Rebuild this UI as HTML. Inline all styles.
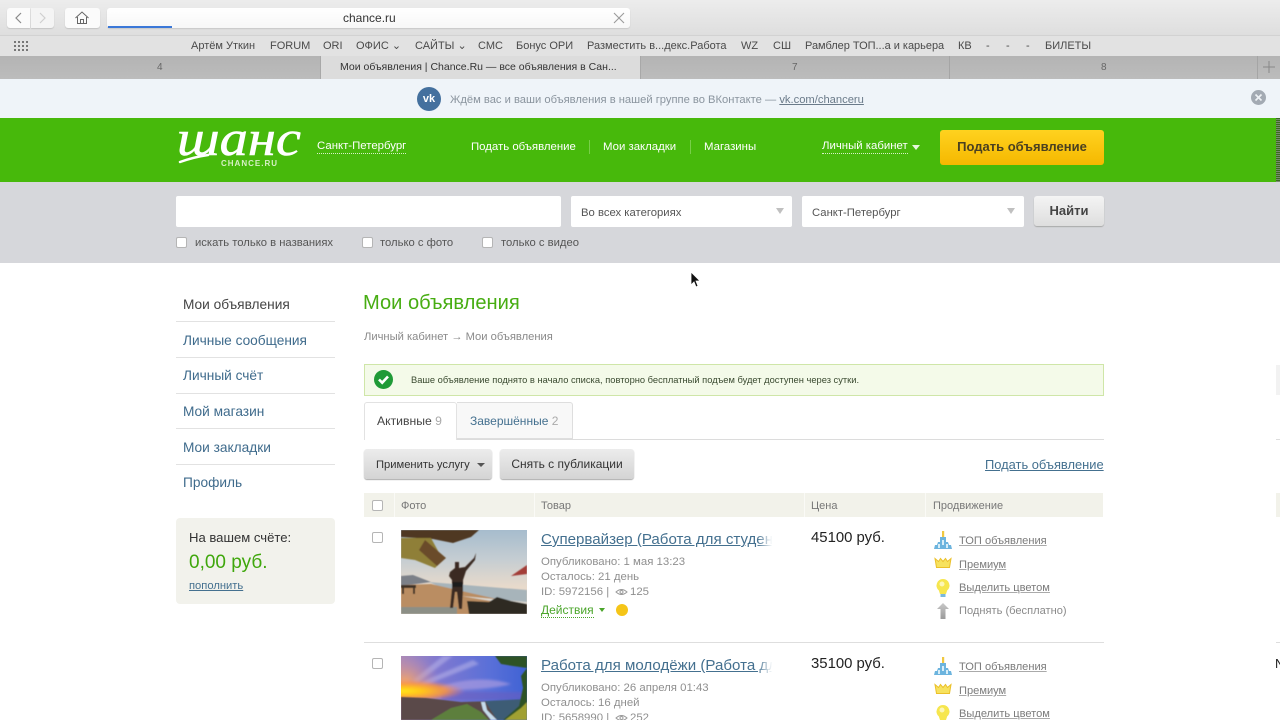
<!DOCTYPE html>
<html lang="ru"><head><meta charset="utf-8"><title>Мои объявления | Chance.Ru</title>
<style>
*{box-sizing:border-box}
html,body{margin:0;padding:0;width:1280px;height:720px;overflow:hidden;background:#fff}
body{position:relative;font-family:"Liberation Sans","Noto Sans CJK SC",sans-serif;color:#444}
#w{position:absolute;left:0;top:0;width:1280px;height:720px;overflow:hidden;filter:blur(.35px)}
.a{position:absolute;white-space:nowrap}
.b{position:absolute}
.bm{font-size:11px;color:#4a4a4a;top:40px;line-height:12px}
.tabn{position:absolute;top:62px;font-size:10px;color:#666;line-height:12px}
.nav{top:140px;font-size:11.4px;color:#fff;line-height:14px}
.side{left:183px;font-size:13.7px;color:#3f6b8c;line-height:16px}
.sl{position:absolute;left:176px;width:159px;height:1px;background:#e2e2e2}
.cb{position:absolute;width:11px;height:11px;background:#fff;border:1px solid #b5b5b5;border-radius:2px}
.meta{font-size:11.4px;color:#8f8f8f;line-height:14px;left:541px}
.title{left:541px;font-size:15.1px;color:#44708f;text-decoration:underline;line-height:18px;width:232px;overflow:hidden}
.fade{position:absolute;left:757px;width:18px;height:20px;background:linear-gradient(90deg,rgba(255,255,255,0),#fff 85%)}
.price{left:811px;font-size:14.9px;color:#222;line-height:17px}
.pr{font-size:11.1px;color:#7b7b7b;line-height:14px;text-decoration:underline;text-decoration-color:#aaa}
.th{top:500px;font-size:11px;color:#777;line-height:13px}
.btn{position:absolute;top:449px;height:30px;background:linear-gradient(#ececec,#d4d4d4);border-radius:3px;box-shadow:0 1px 1px #aaa;font-size:12px;color:#333;line-height:30px;text-align:center;white-space:nowrap}
.lb{top:236px;font-size:11.25px;line-height:14px;color:#555}
</style></head><body><div id="w">

<!-- browser chrome -->
<div class="b" style="left:0;top:0;width:1280px;height:35px;background:linear-gradient(#ececec,#dedede)"></div>
<div class="b" style="left:0;top:35px;width:1280px;height:21px;background:#e2e2e2;border-top:1px solid #d2d2d2"></div>
<div class="b" style="left:7px;top:8px;width:23px;height:20px;background:#fbfbfb;border-radius:3px 0 0 3px;box-shadow:0 1px 1px #c4c4c4"></div>
<div class="b" style="left:31px;top:8px;width:23px;height:20px;background:#f4f4f4;border-radius:0 3px 3px 0;box-shadow:0 1px 1px #c4c4c4"></div>
<svg class="b" style="left:7px;top:8px" width="47" height="20" fill="none"><path d="M14 5l-5 5 5 5" stroke="#8a8a8a" stroke-width="1.2"/><path d="M33 5l5 5-5 5" stroke="#cfcfcf" stroke-width="1.2"/></svg>
<div class="b" style="left:65px;top:8px;width:35px;height:20px;background:#fbfbfb;border-radius:3px;box-shadow:0 1px 1px #c4c4c4"></div>
<svg class="b" style="left:74px;top:10px" width="16" height="15" fill="none" stroke="#666" stroke-width="1"><path d="M1.5 8L8 2l6.5 6M3.5 7v6.5h9V7M6.5 13.5V9.5h3v4"/></svg>
<div class="b" style="left:107px;top:8px;width:523px;height:20px;background:linear-gradient(#fff,#f7f7f7);border-radius:3px;box-shadow:0 1px 1px #c8c8c8"></div>
<div class="b" style="left:108px;top:26px;width:64px;height:2px;background:#3b78d8"></div>
<div class="a" style="left:343px;top:11px;font-size:12px;line-height:14px;color:#333">chance.ru</div>
<svg class="b" style="left:613px;top:12px" width="12" height="12" fill="none" stroke="#9a9a9a" stroke-width="1.1"><path d="M1 1l10 10M11 1L1 11"/></svg>
<svg class="b" style="left:14px;top:41px" width="15" height="11" fill="#777"><rect x="0" y="0" width="2" height="2"/><rect x="4" y="0" width="2" height="2"/><rect x="8" y="0" width="2" height="2"/><rect x="12" y="0" width="2" height="2"/><rect x="0" y="4" width="2" height="2"/><rect x="4" y="4" width="2" height="2"/><rect x="8" y="4" width="2" height="2"/><rect x="12" y="4" width="2" height="2"/><rect x="0" y="8" width="2" height="2"/><rect x="4" y="8" width="2" height="2"/><rect x="8" y="8" width="2" height="2"/><rect x="12" y="8" width="2" height="2"/></svg>
<div class="a bm" style="left:191px">Артём Уткин</div>
<div class="a bm" style="left:270px">FORUM</div>
<div class="a bm" style="left:323px">ORI</div>
<div class="a bm" style="left:356px">ОФИС ⌄</div>
<div class="a bm" style="left:415px">САЙТЫ ⌄</div>
<div class="a bm" style="left:478px">СМС</div>
<div class="a bm" style="left:516px">Бонус ОРИ</div>
<div class="a bm" style="left:587px">Разместить в...декс.Работа</div>
<div class="a bm" style="left:741px">WZ</div>
<div class="a bm" style="left:773px">СШ</div>
<div class="a bm" style="left:805px;letter-spacing:-.02px">Рамблер ТОП...а и карьера</div>
<div class="a bm" style="left:958px">КВ</div>
<div class="a bm" style="left:986px">-</div>
<div class="a bm" style="left:1006px">-</div>
<div class="a bm" style="left:1026px">-</div>
<div class="a bm" style="left:1045px">БИЛЕТЫ</div>

<!-- tabs -->
<div class="b" style="left:0;top:56px;width:1280px;height:23px;background:linear-gradient(#b4b4b4,#bcbcbc)"></div>
<div class="b" style="left:320px;top:56px;width:321px;height:23px;background:#dcdcdc;border-left:1px solid #a8a8a8;border-right:1px solid #a8a8a8"></div>
<div class="b" style="left:949px;top:56px;width:1px;height:23px;background:#a5a5a5"></div>
<div class="b" style="left:1257px;top:56px;width:1px;height:23px;background:#a5a5a5"></div>
<div class="tabn" style="left:157px">4</div>
<div class="tabn" style="left:792px">7</div>
<div class="tabn" style="left:1101px">8</div>
<div class="a" style="left:340px;top:61px;font-size:10.5px;line-height:13px;color:#333">Мои объявления | Chance.Ru — все объявления в Сан...</div>
<svg class="b" style="left:1263px;top:61px" width="12" height="12" stroke="#888" stroke-width="1"><path d="M6 0v12M0 6h12"/></svg>

<!-- vk bar -->
<div class="b" style="left:0;top:79px;width:1280px;height:39px;background:#eff4f9"></div>
<div class="b" style="left:417px;top:87px;width:24px;height:24px;border-radius:50%;background:#44709e"></div>
<div class="a" style="left:422px;top:92px;width:14px;font-size:11px;line-height:14px;font-weight:bold;color:#fff;text-align:center">vk</div>
<div class="a" style="left:450px;top:92.5px;font-size:11.2px;line-height:14px;color:#8a949e">Ждём вас и ваши объявления в нашей группе во ВКонтакте — <span style="color:#6a7a89;text-decoration:underline">vk.com/chanceru</span></div>
<div class="b" style="left:1251px;top:90px;width:15px;height:15px;border-radius:50%;background:#a3aab3"></div>
<svg class="b" style="left:1251px;top:90px" width="15" height="15" stroke="#eef2f6" stroke-width="1.6"><path d="M4.5 4.5l6 6M10.5 4.5l-6 6"/></svg>

<!-- green header -->
<div class="b" style="left:0;top:118px;width:1280px;height:64px;background:#47b90b"></div>
<div class="b" style="left:1276px;top:118px;width:4px;height:64px;background:repeating-linear-gradient(#3a6a20 0 1px,#7a8a70 1px 2px)"></div>
<svg class="b" style="left:174px;top:120px" width="132" height="50">
<text x="3" y="35" font-family="Liberation Serif,serif" font-style="italic" font-size="50" fill="#fff" stroke="#fff" stroke-width=".6" textLength="124" lengthAdjust="spacingAndGlyphs">шанс</text>
<path d="M6 42Q20 37 34 35" stroke="#fff" stroke-width="2.5" fill="none" stroke-linecap="round"/>
</svg>
<div class="a" style="left:221px;top:159px;font-size:8px;font-weight:bold;line-height:10px;letter-spacing:1px;color:#d6f0c4">CHANCE.RU</div>
<div class="a nav" style="left:317px;border-bottom:1px dotted #d8f0c8;line-height:13px">Санкт-Петербург</div>
<div class="a nav" style="left:471px">Подать объявление</div>
<div class="b" style="left:589px;top:140px;width:1px;height:14px;background:#78cf48"></div>
<div class="a nav" style="left:603px">Мои закладки</div>
<div class="b" style="left:690px;top:140px;width:1px;height:14px;background:#78cf48"></div>
<div class="a nav" style="left:704px">Магазины</div>
<div class="a nav" style="left:822px;border-bottom:1px dotted #d8f0c8;line-height:13px">Личный кабинет</div>
<div class="b" style="left:912px;top:145px;border:4px solid transparent;border-top:5px solid #e8f6dc;border-bottom:0"></div>
<div class="b" style="left:940px;top:130px;width:164px;height:35px;border-radius:3px;background:linear-gradient(#ffd21f,#f5b800);color:#4a4020;font-size:13px;font-weight:bold;line-height:34px;text-align:center">Подать объявление</div>

<!-- search -->
<div class="b" style="left:0;top:182px;width:1280px;height:81px;background:#d6d7db"></div>
<div class="b" style="left:176px;top:196px;width:385px;height:31px;background:#fff;border-radius:2px"></div>
<div class="b" style="left:571px;top:196px;width:221px;height:31px;background:#fff;border-radius:2px"></div>
<div class="b" style="left:802px;top:196px;width:222px;height:31px;background:#fff;border-radius:2px"></div>
<div class="a" style="left:581px;top:206px;font-size:11.3px;line-height:14px;color:#555">Во всех категориях</div>
<div class="a" style="left:812px;top:206px;font-size:11.3px;line-height:14px;color:#555">Санкт-Петербург</div>
<div class="b" style="left:776px;top:208px;border:4.5px solid transparent;border-top:6px solid #c0c0c0;border-bottom:0"></div>
<div class="b" style="left:1007px;top:208px;border:4.5px solid transparent;border-top:6px solid #c0c0c0;border-bottom:0"></div>
<div class="b" style="left:1034px;top:196px;width:70px;height:30px;border-radius:3px;background:linear-gradient(#f4f4f4,#dedede);box-shadow:0 1px 1px #a8a8a8;font-size:13px;font-weight:bold;color:#444;line-height:29px;text-align:center">Найти</div>
<div class="cb" style="left:176px;top:237px"></div>
<div class="a lb" style="left:195px">искать только в названиях</div>
<div class="cb" style="left:362px;top:237px"></div>
<div class="a lb" style="left:380px">только с фото</div>
<div class="cb" style="left:482px;top:237px"></div>
<div class="a lb" style="left:501px">только с видео</div>

<!-- sidebar -->
<div class="a side" style="top:297px;color:#444">Мои объявления</div><div class="sl" style="top:321px"></div>
<div class="a side" style="top:333px">Личные сообщения</div><div class="sl" style="top:357px"></div>
<div class="a side" style="top:368px">Личный счёт</div><div class="sl" style="top:393px"></div>
<div class="a side" style="top:404px">Мой магазин</div><div class="sl" style="top:428px"></div>
<div class="a side" style="top:440px">Мои закладки</div><div class="sl" style="top:464px"></div>
<div class="a side" style="top:475px">Профиль</div>
<div class="b" style="left:176px;top:518px;width:159px;height:86px;background:#f2f2ec;border-radius:4px"></div>
<div class="a" style="left:189px;top:530px;font-size:13.1px;line-height:16px;color:#333">На вашем счёте:</div>
<div class="a" style="left:189px;top:552px;font-size:19px;line-height:22px;color:#3fa70c">0,00 руб.</div>
<div class="a" style="left:189px;top:580px;font-size:11.2px;line-height:13px;color:#44708f;text-decoration:underline">пополнить</div>

<!-- main -->
<div class="a" style="left:363px;top:291px;font-size:20.1px;line-height:24px;color:#47ad12">Мои объявления</div>
<div class="a" style="left:364px;top:330px;font-size:11.2px;line-height:14px;color:#8a8a8a">Личный кабинет → Мои объявления</div>
<div class="b" style="left:364px;top:364px;width:740px;height:32px;background:#f4fae9;border:1px solid #cfe6a8"></div>
<div class="b" style="left:374px;top:370px;width:19px;height:19px;border-radius:50%;background:#1f9a37"></div>
<svg class="b" style="left:374px;top:370px" width="19" height="19" fill="none" stroke="#fff" stroke-width="2.6"><path d="M5 9.5l3.2 3.2L14 6.5"/></svg>
<div class="a" style="left:411px;top:374px;font-size:9.33px;line-height:12px;color:#3a4a30">Ваше объявление поднято в начало списка, повторно бесплатный подъем будет доступен через сутки.</div>

<div class="b" style="left:364px;top:439px;width:740px;height:1px;background:#dcdcdc"></div>
<div class="b" style="left:364px;top:402px;width:93px;height:38px;background:#fff;border:1px solid #e2e2e2;border-bottom:0;border-radius:3px 3px 0 0"></div>
<div class="b" style="left:457px;top:402px;width:116px;height:37px;background:#f8f8f8;border:1px solid #dedede;border-left:0;border-radius:0 3px 0 0"></div>
<div class="a" style="left:377px;top:414px;font-size:12.2px;line-height:14px;color:#444">Активные <span style="color:#aaa">9</span></div>
<div class="a" style="left:470px;top:414px;font-size:12px;line-height:14px;color:#44708f">Завершённые <span style="color:#aaa">2</span></div>

<div class="btn" style="left:364px;width:128px"></div>
<div class="a" style="left:376px;top:458px;font-size:11.2px;line-height:14px;color:#333">Применить услугу</div>
<div class="b" style="left:477px;top:463px;border:4px solid transparent;border-top:4px solid #555;border-bottom:0"></div>
<div class="btn" style="left:500px;width:134px">Снять с публикации</div>
<div class="a" style="left:985px;top:456.500px;font-size:12.9px;line-height:16px;color:#44708f;text-decoration:underline">Подать объявление</div>

<!-- table head -->
<div class="b" style="left:364px;top:493px;width:739px;height:24px;background:#f2f2ea"></div>
<div class="b" style="left:394px;top:493px;width:1px;height:24px;background:#fafaf6"></div>
<div class="b" style="left:534px;top:493px;width:1px;height:24px;background:#fafaf6"></div>
<div class="b" style="left:804px;top:493px;width:1px;height:24px;background:#fafaf6"></div>
<div class="b" style="left:925px;top:493px;width:1px;height:24px;background:#fafaf6"></div>
<div class="cb" style="left:372px;top:500px"></div>
<div class="a th" style="left:401px">Фото</div>
<div class="a th" style="left:541px">Товар</div>
<div class="a th" style="left:811px">Цена</div>
<div class="a th" style="left:933px">Продвижение</div>

<!-- row 1 -->
<div class="cb" style="left:372px;top:532px"></div>
<svg class="b" style="left:401px;top:530px" width="126" height="84">
<defs>
<linearGradient id="s1" x1="0" y1="0" x2="0" y2="1"><stop offset="0" stop-color="#a6bccd"/><stop offset=".35" stop-color="#c5cdd2"/><stop offset=".68" stop-color="#e8dacb"/></linearGradient>
<filter id="bl" x="-5%" y="-5%" width="110%" height="110%"><feGaussianBlur stdDeviation=".6"/></filter>
<filter id="bl2" x="-5%" y="-5%" width="110%" height="110%"><feGaussianBlur stdDeviation="1.4"/></filter>
<radialGradient id="sun"><stop offset="0" stop-color="#ffe81c"/><stop offset=".35" stop-color="#ffc21e"/><stop offset=".7" stop-color="#fb9440" stop-opacity=".85"/><stop offset="1" stop-color="#ee7f70" stop-opacity="0"/></radialGradient>
<radialGradient id="glow"><stop offset="0" stop-color="#f8a860" stop-opacity=".95"/><stop offset="1" stop-color="#c88ab0" stop-opacity="0"/></radialGradient>
<clipPath id="c1"><rect width="126" height="84"/></clipPath>
<clipPath id="c2"><rect width="126" height="64"/></clipPath>
</defs>
<g clip-path="url(#c1)"><rect width="126" height="84" fill="url(#s1)"/>
<g filter="url(#bl)">
<path d="M0 46L12 45 30 52 0 56Z" fill="#7b8088"/>
<path d="M28 52L126 60V74L60 66Z" fill="#a7b4ba"/>
<path d="M0 55L30 54 126 76V84H0Z" fill="#ba8d62"/>
<path d="M60 66L126 72V77Z" fill="#dcd8d0"/>
<rect y="77" width="56" height="7" fill="#8c8f86"/>
<path d="M0 0H78L70 7 52 13 32 9 0 7Z" fill="#4f3820"/>
<path d="M0 8H30L42 30 34 38 14 30 0 28Z" fill="#8f7f38"/>
<path d="M24 10L45 28 36 36 18 20Z" fill="#6a4c2a"/>
<path d="M49 42L54 38V32H58V38L64 37 73 28 75 23 74 30 65 41 62 50 62 60 61 79H58L56 62 54 62 52 78H49L51 58 51 50 48 46Z" fill="#3a2a20"/>
<rect x="51.500" y="52" width="10" height="5" fill="#1e1a1c"/>
<path d="M110 46L126 35V44Z" fill="#a33e38"/>
<path d="M66 71L88 72 96 67 110 71 126 74V84H68Z" fill="#2f2b24"/>
<rect y="55" width="15" height="3" fill="#3f3226"/><rect x="1" y="58" width="2" height="6" fill="#3f3226"/><rect x="12" y="58" width="2" height="6" fill="#3f3226"/>
</g></g>
</svg>
<div class="a title" style="top:531px">Супервайзер (Работа для студентов)</div><div class="fade" style="top:531px"></div>
<div class="a meta" style="top:555px">Опубликовано: 1 мая 13:23</div>
<div class="a meta" style="top:570px">Осталось: 21 день</div>
<div class="a meta" style="top:585px">ID: 5972156 |</div>
<svg class="b" style="left:615px;top:587px" width="13" height="10" fill="none" stroke="#9a9a9a"><path d="M1 5Q6.500 0 12 5 6.500 10 1 5Z"/><circle cx="6.500" cy="5" r="1.500"/></svg>
<div class="a meta" style="left:630px;top:585px">125</div>
<div class="a" style="left:541px;top:603px;font-size:12px;line-height:14px;color:#4aa52a;border-bottom:1px dotted #4aa52a">Действия</div>
<div class="b" style="left:599px;top:608px;border:3px solid transparent;border-top:4px solid #4aa52a;border-bottom:0"></div>
<div class="b" style="left:616px;top:604px;width:12px;height:12px;border-radius:50%;background:#f5c518"></div>
<div class="a price" style="top:530px">45100 руб.</div>

<svg class="b" style="left:933px;top:531px" width="20" height="90">
<defs><linearGradient id="ar" x1="0" y1="0" x2="0" y2="1"><stop offset="0" stop-color="#c8c8c8"/><stop offset="1" stop-color="#9a9a9a"/></linearGradient></defs>
<path d="M9 0h2.200v6H9z" fill="#f0c840"/>
<path d="M7 6h6v5h2l1 3h2l1 4H1l1-4h2l1-3h2z" fill="#6cb4de"/><rect x="9" y="9" width="2" height="5" fill="#d8eef8"/><rect x="5" y="13" width="2" height="4" fill="#d8eef8"/><rect x="13" y="13" width="2" height="4" fill="#d8eef8"/>
<path d="M2 27.500l3.500 3 2-3 2.500 3 2.500-3 2 3 3.500-3-1.500 9H3.500z" fill="#f7e25e" stroke="#ebc02a"/>
<path d="M10 48a6.500 6.500 0 0 1 4.200 11.400L13 63H7l-1.200-3.600A6.500 6.500 0 0 1 10 48z" fill="#f6e64e"/><circle cx="9" cy="53" r="2.500" fill="#fcf6b8"/><rect x="7.500" y="63" width="5" height="3" fill="#7ab8dc"/>
<path d="M10 72l6 6h-3.500v10h-5V78H4z" fill="url(#ar)"/>
</svg>
<div class="a pr" style="left:959px;top:534px">ТОП объявления</div>
<div class="a pr" style="left:959px;top:558px">Премиум</div>
<div class="a pr" style="left:959px;top:581px">Выделить цветом</div>
<div class="a pr" style="left:959px;top:604px;text-decoration:none;color:#8a8a8a">Поднять (бесплатно)</div>

<div class="b" style="left:364px;top:642px;width:740px;height:1px;background:#dedede"></div>

<!-- row 2 -->
<div class="cb" style="left:372px;top:658px"></div>
<svg class="b" style="left:401px;top:656px" width="126" height="64">
<defs>
<linearGradient id="s2" x1="0" y1="0" x2="1" y2="0"><stop offset="0" stop-color="#a98ab8"/><stop offset=".3" stop-color="#7f78d0"/><stop offset=".7" stop-color="#5a70d8"/><stop offset="1" stop-color="#3f62d4"/></linearGradient>
</defs>
<g clip-path="url(#c2)"><rect width="126" height="64" fill="url(#s2)"/>
<g filter="url(#bl2)">
<path d="M12 24L42 0H52L16 27ZM18 27L72 4 78 8 22 30Z" fill="#b8b4ea" opacity=".55"/>
<path d="M40 30Q80 18 110 28 90 34 40 34Z" fill="#a89ae0" opacity=".7"/>
<path d="M40 36H126V44H40Z" fill="#6a5ec0" opacity=".6"/>
<ellipse cx="4" cy="26" rx="34" ry="28" fill="url(#glow)"/>
<ellipse cx="2" cy="35" rx="62" ry="11" fill="url(#sun)"/>
</g>
<g filter="url(#bl)">
<path d="M0 41L25 42 60 46 126 44V64H0Z" fill="#5a4a48"/>
<path d="M30 64L50 52 66 48 80 56 88 64Z" fill="#5d7f3c"/>
<path d="M84 45L126 43V64H96Z" fill="#3c5c74"/>
<path d="M80 46L84 46 86 54 96 64H90L82 54Z" fill="#c6dcec"/>
<path d="M94 0H126V47L122 56 112 64H102L118 50 122 32 120 20 126 12 112 10 100 8Z" fill="#2e5228"/>
<path d="M104 64L120 52 126 46V64Z" fill="#a0a030"/>
</g></g>
</svg>
<div class="a title" style="top:657px">Работа для молодёжи (Работа для всех)</div><div class="fade" style="top:657px"></div>
<div class="a meta" style="top:681px">Опубликовано: 26 апреля 01:43</div>
<div class="a meta" style="top:696px">Осталось: 16 дней</div>
<div class="a meta" style="top:711px">ID: 5658990 |</div>
<svg class="b" style="left:615px;top:713px" width="13" height="10" fill="none" stroke="#9a9a9a"><path d="M1 5Q6.500 0 12 5 6.500 10 1 5Z"/><circle cx="6.500" cy="5" r="1.500"/></svg>
<div class="a meta" style="left:630px;top:711px">252</div>
<div class="a price" style="top:656px">35100 руб.</div>
<svg class="b" style="left:933px;top:657px" width="20" height="63">
<path d="M9 0h2.200v6H9z" fill="#f0c840"/>
<path d="M7 6h6v5h2l1 3h2l1 4H1l1-4h2l1-3h2z" fill="#6cb4de"/><rect x="9" y="9" width="2" height="5" fill="#d8eef8"/><rect x="5" y="13" width="2" height="4" fill="#d8eef8"/><rect x="13" y="13" width="2" height="4" fill="#d8eef8"/>
<path d="M2 27.500l3.500 3 2-3 2.500 3 2.500-3 2 3 3.500-3-1.500 9H3.500z" fill="#f7e25e" stroke="#ebc02a"/>
<path d="M10 48a6.500 6.500 0 0 1 4.200 11.400L13 63H7l-1.200-3.600A6.500 6.500 0 0 1 10 48z" fill="#f6e64e"/><circle cx="9" cy="53" r="2.500" fill="#fcf6b8"/>
</svg>
<div class="a pr" style="left:959px;top:660px">ТОП объявления</div>
<div class="a pr" style="left:959px;top:684px">Премиум</div>
<div class="a pr" style="left:959px;top:707px">Выделить цветом</div>

<!-- cursor -->
<svg class="b" style="left:690px;top:271px" width="12" height="18"><path d="M1 1v13l3-3 2 5 2-1-2-5h4z" fill="#111" stroke="#fff" stroke-width=".8"/></svg>

<!-- right edge -->
<div class="b" style="left:1276px;top:365px;width:4px;height:30px;background:#f2f2f2"></div>
<div class="b" style="left:1276px;top:439px;width:4px;height:1px;background:#ddd"></div>
<div class="b" style="left:1276px;top:493px;width:4px;height:24px;background:#f2f2ea"></div>
<div class="b" style="left:1276px;top:642px;width:4px;height:1px;background:#ddd"></div>
<div class="a" style="left:1275px;top:656px;font-size:13px;line-height:16px;color:#222">N</div>
</div></body></html>
